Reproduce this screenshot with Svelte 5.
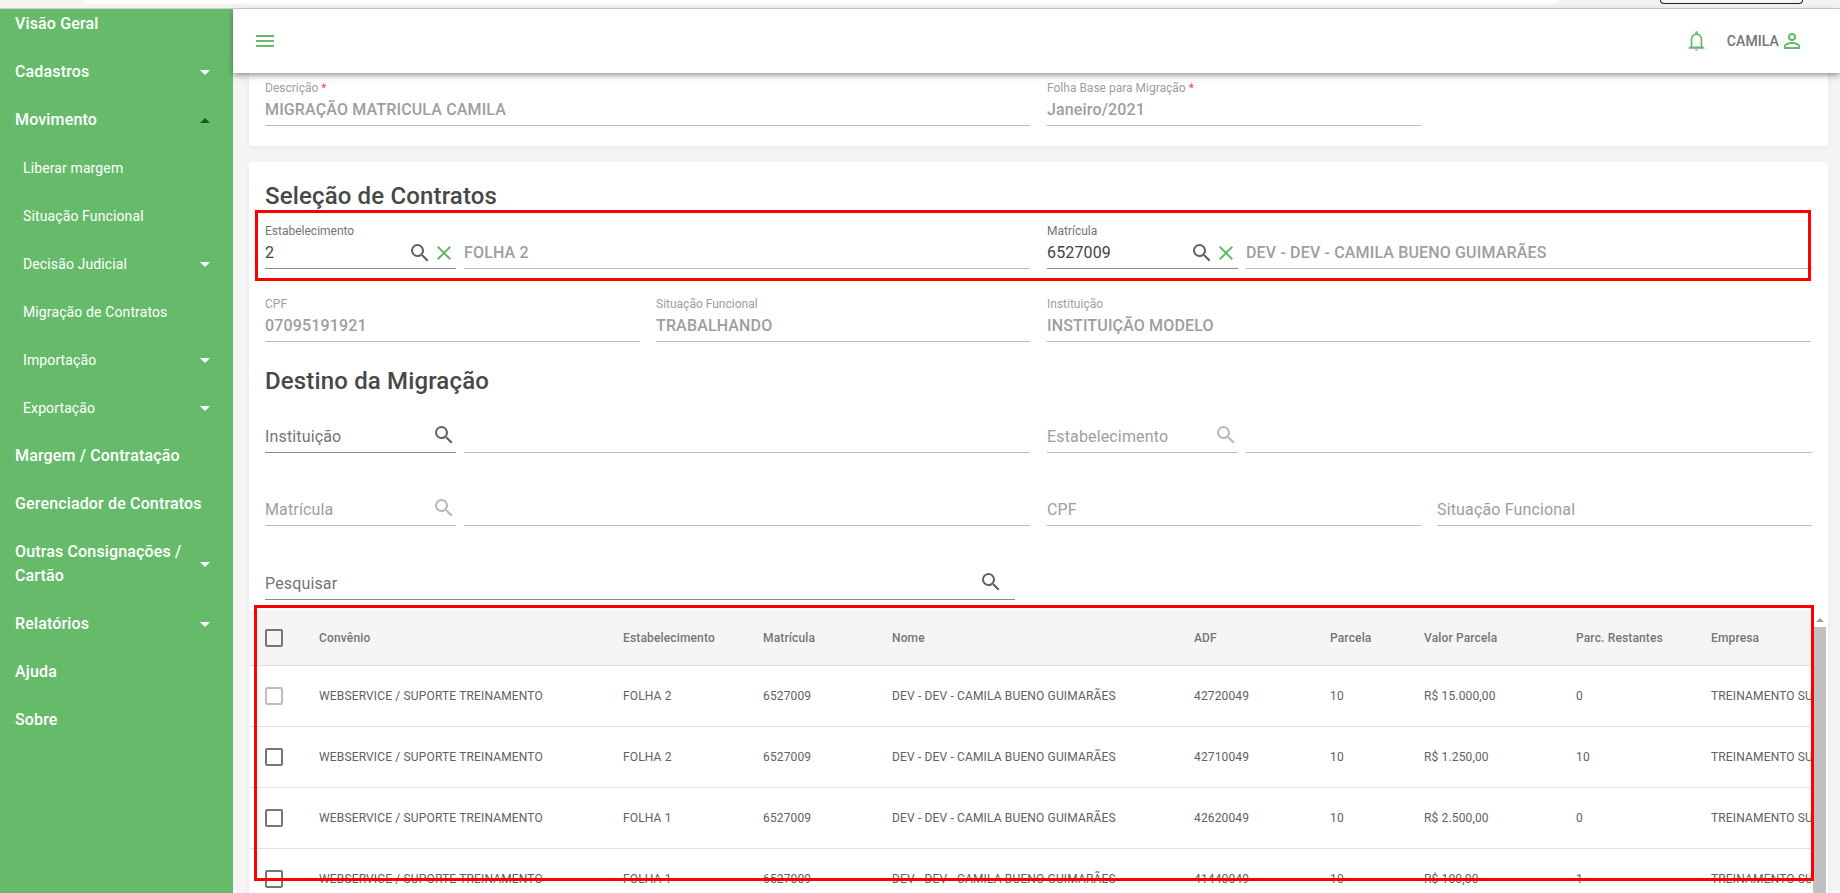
<script>
  const menu = [
    { label: 'Visão Geral' },
    { label: 'Cadastros', caret: 'down' },
    { label: 'Movimento', caret: 'up' },
    { label: 'Liberar margem', sub: true },
    { label: 'Situação Funcional', sub: true },
    { label: 'Decisão Judicial', sub: true, caret: 'down' },
    { label: 'Migração de Contratos', sub: true },
    { label: 'Importação', sub: true, caret: 'down' },
    { label: 'Exportação', sub: true, caret: 'down' },
    { label: 'Margem / Contratação' },
    { label: 'Gerenciador de Contratos' },
    { label: 'Outras Consignações / Cartão', caret: 'down', tall: true },
    { label: 'Relatórios', caret: 'down' },
    { label: 'Ajuda' },
    { label: 'Sobre' }
  ];
  const cols = ['Convênio', 'Estabelecimento', 'Matrícula', 'Nome', 'ADF', 'Parcela', 'Valor Parcela', 'Parc. Restantes', 'Empresa'];
  const nome = 'DEV - DEV - CAMILA BUENO GUIMARÃES';
  const conv = 'WEBSERVICE / SUPORTE TREINAMENTO';
  const emp = 'TREINAMENTO SUPORTE';
  const rows = [
    { off: true, c: [conv, 'FOLHA 2', '6527009', nome, '42720049', '10', 'R$ 15.000,00', '0', emp] },
    { c: [conv, 'FOLHA 2', '6527009', nome, '42710049', '10', 'R$ 1.250,00', '10', emp] },
    { c: [conv, 'FOLHA 1', '6527009', nome, '42620049', '10', 'R$ 2.500,00', '0', emp] },
    { c: [conv, 'FOLHA 1', '6527009', nome, '41440049', '10', 'R$ 100,00', '1', emp] }
  ];
  const magnify = 'M9.5,3A6.5,6.5 0 0,1 16,9.5C16,11.11 15.41,12.59 14.44,13.73L14.71,14H15.5L20.5,19L19,20.5L14,15.5V14.71L13.73,14.44C12.59,15.41 11.11,16 9.5,16A6.5,6.5 0 0,1 3,9.5A6.5,6.5 0 0,1 9.5,3M9.5,5C7,5 5,7 5,9.5C5,12 7,14 9.5,14C12,14 14,12 14,9.5C14,7 12,5 9.5,5Z';
  const close = 'M19,6.41L17.59,5L12,10.59L6.41,5L5,6.41L10.59,12L5,17.59L6.41,19L12,13.41L17.59,19L19,17.59L13.41,12L19,6.41Z';
</script>

{#snippet icon(d, cls)}
  <svg class={cls} viewBox="0 0 24 24" width="24" height="24" aria-hidden="true"><path {d} /></svg>
{/snippet}

{#snippet field(label, value, cls = '', req = false)}
  <div class="field {cls}">
    <span class="lab">{label}{#if req}<i>*</i>{/if}</span>
    <span class="val">{value}</span>
  </div>
{/snippet}

{#snippet lookup(label, value)}
  <div class="field active">
    <span class="lab">{label}</span>
    <span class="val with-icons">
      <span class="grow">{value}</span>
      {@render icon(magnify, 'ic-gray')}
      {@render icon(close, 'ic-green')}
    </span>
  </div>
{/snippet}

{#snippet empty(label, cls = '', search = false)}
  <div class="ph {cls}">
    <span class="grow">{label}</span>
    {#if search}{@render icon(magnify, 'ic-gray')}{/if}
  </div>
{/snippet}

<div class="page">
  <div class="chrome">
    <div class="tab"></div>
    <div class="pill"></div>
  </div>
  <div class="shell">
    <aside class="side">
      <ul>
        {#each menu as m}
          <li class:sub={m.sub} class:tall={m.tall}>
            <span class="grow">{m.label}</span>
            {#if m.caret}<b class="caret {m.caret}"></b>{/if}
          </li>
        {/each}
      </ul>
    </aside>
    <div class="main">
      <header>
        <svg class="burger" viewBox="0 0 18 12" width="18" height="12" aria-hidden="true"><path d="M0 0h18v2H0zM0 5h18v2H0zM0 10h18v2H0z" /></svg>
        <div class="right">
          <svg class="bell" viewBox="0 0 17 20" width="17" height="20" aria-hidden="true"><path d="M8.5 0.3c.7 0 1.2.5 1.2 1.2v.9c2.7.6 4.6 3 4.6 5.8v6.7l2.2 1.9v1H.5v-1l2.2-1.9V8.2c0-2.8 1.9-5.2 4.6-5.8v-.9c0-.7.5-1.2 1.2-1.2zM4.4 8.2v7.2h8.2V8.2c0-2.4-1.8-4.3-4.1-4.3S4.4 5.8 4.4 8.2zM7 18.4h3c0 .8-.7 1.4-1.5 1.4S7 19.2 7 18.4z" /></svg>
          <span class="user">CAMILA</span>
          {@render icon('M12,4A4,4 0 0,1 16,8A4,4 0 0,1 12,12A4,4 0 0,1 8,8A4,4 0 0,1 12,4M12,6A2,2 0 0,0 10,8A2,2 0 0,0 12,10A2,2 0 0,0 14,8A2,2 0 0,0 12,6M12,13C14.67,13 20,14.33 20,17V20H4V17C4,14.33 9.33,13 12,13M12,14.9C9.03,14.9 5.9,16.36 5.9,17V18.1H18.1V17C18.1,16.36 14.97,14.9 12,14.9Z', 'ic-user')}
        </div>
      </header>
      <div class="scroll">
        <section class="card first">
          <div class="row top">
            {@render field('Descrição', 'MIGRAÇÃO MATRICULA CAMILA', 'w-desc', true)}
            {@render field('Folha Base para Migração', 'Janeiro/2021', 'w-half', true)}
          </div>
        </section>
        <section class="card second">
          <h2 class="h1">Seleção de Contratos</h2>
          <div class="g-lookup">
            {@render lookup('Estabelecimento', '2')}
            {@render field('', 'FOLHA 2')}
            {@render lookup('Matrícula', '6527009')}
            {@render field('', nome)}
          </div>
          <div class="g-three">
            {@render field('CPF', '07095191921')}
            {@render field('Situação Funcional', 'TRABALHANDO')}
            {@render field('Instituição', 'INSTITUIÇÃO MODELO')}
          </div>
          <h2 class="h2">Destino da Migração</h2>
          <div class="g-lookup dest">
            {@render empty('Instituição', 'dark', true)}
            {@render empty('')}
            {@render empty('Estabelecimento', 'light', true)}
            {@render empty('')}
          </div>
          <div class="g-dest2">
            {@render empty('Matrícula', 'light', true)}
            {@render empty('')}
            {@render empty('CPF')}
            {@render empty('Situação Funcional')}
          </div>
          <div class="search">
            {@render empty('Pesquisar', 'dark', true)}
          </div>
          <div class="table-wrap">
            <div class="table">
              <div class="tr head">
                <span class="cb dark"></span>
                {#each cols as c}<span class="td">{c}</span>{/each}
              </div>
              {#each rows as r}
                <div class="tr">
                  <span class="cb" class:dark={!r.off} class:off={r.off}></span>
                  {#each r.c as c}<span class="td">{c}</span>{/each}
                </div>
              {/each}
            </div>
            <div class="sb"><b></b><u></u></div>
          </div>
        </section>
      </div>
    </div>
  </div>
  <div class="mark m1"></div>
  <div class="mark m2"></div>
</div>

<style>
  :global(body) { margin: 0; background: #f5f5f5; }
  .page { position: relative; width: 1840px; height: 893px; overflow: hidden; font-family: Roboto, "Liberation Sans", sans-serif; background: #f5f5f5; }
  .chrome { height: 8px; border-bottom: 1px solid #d0d0d0; background: #f5f5f5; display: flex; position: relative; }
  .tab { margin-left: 85px; width: 1473px; height: 4px; background: #fff; border-radius: 0 0 4px 4px; }
  .pill { margin-left: 102px; width: 141px; height: 3px; border: 1px solid #222; border-top: 0; border-radius: 0 0 8px 8px; }
  .shell { display: flex; height: 884px; }
  .side { width: 233px; flex: none; background: #66bb6a; overflow: hidden; color: #fff; }
  ul { list-style: none; margin: -9px 0 0; padding: 0; }
  li { height: 48px; display: flex; align-items: center; padding: 0 23px 0 15px; font-size: 16px; font-weight: 500; line-height: 24px; letter-spacing: .15px; }
  li.sub { padding-left: 23px; font-size: 14px; font-weight: 400; letter-spacing: .12px; }
  li.tall { height: 72px; }
  li.tall .grow { padding-right: 10px; }
  .grow { flex: 1; min-width: 0; }
  .caret { width: 0; height: 0; border-left: 5px solid transparent; border-right: 5px solid transparent; }
  .caret.down { border-top: 5px solid #fff; }
  .caret.up { border-bottom: 5px solid #1b5e20; }
  .main { flex: 1; min-width: 0; position: relative; }
  header { position: relative; z-index: 2; height: 64px; background: #fff; box-shadow: 0 2px 4px -1px rgba(0,0,0,.25), 0 4px 5px 0 rgba(0,0,0,.14), 0 1px 10px 0 rgba(0,0,0,.12); display: flex; align-items: center; justify-content: space-between; padding: 0 36px 0 23px; }
  .burger path, .bell path, .ic-user path, .ic-green path { fill: #66bb6a; }
  .ic-gray path { fill: #616161; }
  .right { display: flex; align-items: center; }
  .bell { margin-right: 22px; }
  .user { font-size: 14px; font-weight: 500; color: #757575; margin: -1px 1px 0 0; letter-spacing: .1px; }
  .scroll { padding: 0 12px 0 16px; height: 820px; overflow: hidden; }
  .card { background: #fff; border-radius: 4px; box-shadow: 0 2px 6px rgba(0,0,0,.06); padding: 0 16px; }
  .card.first { height: 73px; margin-bottom: 16px; border-radius: 0 0 4px 4px; }
  .row.top { display: grid; grid-template-columns: 765px 374px; column-gap: 17px; padding-top: 7px; }
  .second { height: 740px; padding-top: 22px; padding-right: 0 !important; }
  h2 { margin: 0; font-size: 24px; font-weight: 500; line-height: 24px; color: #484848; letter-spacing: .15px; }
  .h1 { margin-bottom: 15px; }
  .h2 { margin: 27px 0 27px; }
  .field { display: flex; flex-direction: column; border-bottom: 1px solid #bdbdbd; min-width: 0; box-sizing: border-box; height: 46px; }
  .field.active { border-bottom-color: #8c8c8c; }
  .lab { font-size: 12px; line-height: 16px; color: #9e9e9e; height: 16px; }
  .active .lab { color: #757575; }
  .lab i { color: #ef5350; font-style: normal; margin-left: 3px; }
  .val { font-size: 16px; line-height: 24px; font-weight: 500; color: #9e9e9e; white-space: nowrap; margin-top: 2px; letter-spacing: .15px; }
  .with-icons { display: flex; align-items: center; color: #424242; font-weight: 400; }
  .with-icons svg { flex: none; }
  .g-lookup { display: grid; grid-template-columns: 191px 566px 191px 549px; column-gap: 8px; }
  .g-lookup > :nth-child(3) { margin-left: 9px; margin-right: -9px; }
  .g-lookup > :nth-child(4) { margin-left: 9px; width: 566px; }
  .g-three { display: grid; grid-template-columns: 375px 374px 765px; column-gap: 16px; margin-top: 27px; width: 1547px; }
  .g-three > :nth-child(3) { margin-left: 1px; }
  .ph { display: flex; align-items: center; height: 32px; border-bottom: 1px solid #bdbdbd; font-size: 16px; color: #9e9e9e; min-width: 0; letter-spacing: .15px; }
  .ph.dark { color: #757575; border-bottom-color: #8c8c8c; }
  .ph svg { flex: none; margin-top: -2px; }
  .ph.light svg { opacity: .45; }
  .g-dest2 { display: grid; grid-template-columns: 191px 566px 374px 375px; column-gap: 8px; margin-top: 40px; }
  .g-dest2 > :nth-child(3) { margin-left: 9px; margin-right: -9px; }
  .g-dest2 > :nth-child(4) { margin-left: 17px; margin-right: -17px; width: 375px; }
  .search { width: 750px; margin-top: 41px; }
  .search svg { margin-right: 12px; }
  .table-wrap { position: relative; margin: 10px 0 0 -16px; width: 1579px; height: 290px; }
  .table { width: 1562px; overflow: hidden; height: 100%; }
  .tr { display: grid; grid-template-columns: 70px 304px 140px 129px 302px 136px 94px 152px 135px 400px; width: 2000px; height: 61px; align-items: center; border-bottom: 1px solid #e0e0e0; box-sizing: border-box; font-size: 12px; color: #616161; letter-spacing: .15px; }
  .tr.head { height: 56px; background: #f5f5f5; color: #757575; font-weight: 500; }
  .td { white-space: nowrap; }
  .cb { width: 18px; height: 18px; box-sizing: border-box; border: 2px solid #757575; border-radius: 2px; margin-left: 16px; }
  .cb.off { border-color: #bdbdbd; }
  .sb { position: absolute; left: 1564px; top: 0; width: 13px; height: 100%; background: #fff; display: flex; flex-direction: column; align-items: center; }
  .sb b { width: 0; height: 0; border-left: 4px solid transparent; border-right: 4px solid transparent; border-bottom: 4px solid #9e9e9e; margin: 8px 0 5px; }
  .sb u { display: block; width: 13px; flex: 1; background: #c1c1c1; }
  .mark { position: absolute; border: 3px solid #f00; box-sizing: border-box; z-index: 3; pointer-events: none; }
  .m1 { left: 255px; top: 210px; width: 1556px; height: 71px; }
  .m2 { left: 254px; top: 605px; width: 1560px; height: 276px; }
</style>
